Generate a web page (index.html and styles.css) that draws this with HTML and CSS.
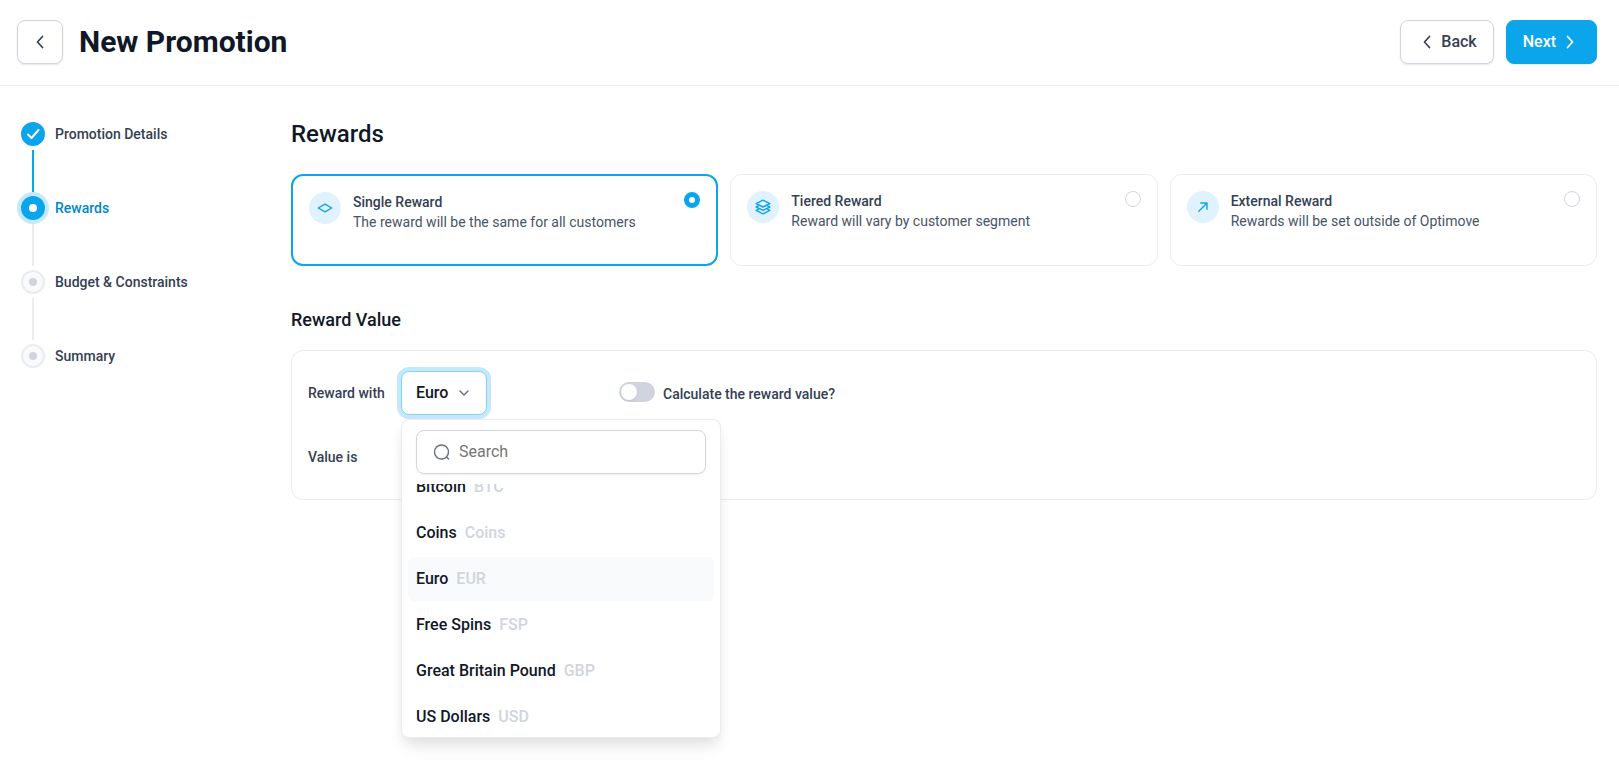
FILE: index.html
```html
<!DOCTYPE html>
<html lang="en">
<head>
    <meta charset="UTF-8">
    <meta name="viewport" content="width=device-width, initial-scale=1.0">
    <title>New Promotion</title>
    <link rel="stylesheet" href="styles.css">
</head>
<body>
    <!-- Header -->
    <header class="page-header">
        <button class="btn btn-icon" type="button" aria-label="Go back">
            <svg class="icon" viewBox="0 0 20 20"><path d="M12.5 4.5 7.5 10l5 5.5"/></svg>
        </button>
        <h1>New Promotion</h1>
        <div class="header-actions">
            <button class="btn" type="button">
                <svg class="icon" viewBox="0 0 20 20"><path d="M12.5 4.5 7.5 10l5 5.5"/></svg>
                Back
            </button>
            <button class="btn btn-primary" type="button">
                Next
                <svg class="icon" viewBox="0 0 20 20"><path d="M7.5 4.5l5 5.5-5 5.5"/></svg>
            </button>
        </div>
    </header>

    <div class="layout">
        <!-- Steps -->
        <nav class="steps">
            <ol>
                <li class="step done">
                    <span class="marker"><svg viewBox="0 0 24 24"><path d="M7 12.5l3.5 3.5L17.5 8"/></svg></span>
                    <a href="#details">Promotion Details</a>
                </li>
                <li class="step current">
                    <span class="marker"></span>
                    <a href="#rewards">Rewards</a>
                </li>
                <li class="step">
                    <span class="marker"></span>
                    <a href="#budget">Budget &amp; Constraints</a>
                </li>
                <li class="step">
                    <span class="marker"></span>
                    <a href="#summary">Summary</a>
                </li>
            </ol>
        </nav>

        <!-- Rewards -->
        <main id="rewards">
            <h2>Rewards</h2>
            <div class="cards">
                <label class="card selected">
                    <span class="card-icon">
                        <svg viewBox="0 0 16 16"><path d="M8 4.2 14.8 8 8 11.8 1.2 8z"/></svg>
                    </span>
                    <span class="card-text">
                        <strong>Single Reward</strong>
                        <span>The reward will be the same for all customers</span>
                    </span>
                    <input type="radio" name="reward-type" checked>
                </label>
                <label class="card">
                    <span class="card-icon">
                        <svg viewBox="0 0 16 16"><path d="M8 1.2 14.8 4.6 8 8 1.2 4.6zM3.2 7 1.2 8 8 11.4 14.8 8l-2-1M3.2 10.4l-2 1L8 14.8l6.8-3.4-2-1"/></svg>
                    </span>
                    <span class="card-text">
                        <strong>Tiered Reward</strong>
                        <span>Reward will vary by customer segment</span>
                    </span>
                    <input type="radio" name="reward-type">
                </label>
                <label class="card">
                    <span class="card-icon">
                        <svg viewBox="0 0 16 16"><path d="M3.8 12.2l8.2-8.2M5.8 4H12v6.2"/></svg>
                    </span>
                    <span class="card-text">
                        <strong>External Reward</strong>
                        <span>Rewards will be set outside of Optimove</span>
                    </span>
                    <input type="radio" name="reward-type">
                </label>
            </div>

            <h3>Reward Value</h3>
            <div class="panel">
                <div class="row">
                    <label class="field-label" for="reward-unit">Reward with</label>
                    <div class="dropdown">
                        <select id="reward-unit">
                            <option>Bitcoin</option>
                            <option>Coins</option>
                            <option selected>Euro</option>
                            <option>Free Spins</option>
                            <option>Great Britain Pound</option>
                            <option>US Dollars</option>
                        </select>
                        <svg class="chevron" viewBox="0 0 16 16"><path d="M4 6l4 4 4-4"/></svg>

                        <!-- Currency menu -->
                        <div class="menu">
                            <div class="search">
                                <svg viewBox="0 0 20 20"><circle cx="9.5" cy="10" r="7"/><path d="M14.5 15l2 2"/></svg>
                                <input type="text" placeholder="Search" aria-label="Search">
                            </div>
                            <ul class="options" id="options">
                                <li>Bitcoin <span>BTC</span></li>
                                <li>Coins <span>Coins</span></li>
                                <li class="active">Euro <span>EUR</span></li>
                                <li>Free Spins <span>FSP</span></li>
                                <li>Great Britain Pound <span>GBP</span></li>
                                <li>US Dollars <span>USD</span></li>
                            </ul>
                        </div>
                    </div>
                    <div class="switch">
                        <input type="checkbox" id="calculate">
                        <label for="calculate">Calculate the reward value?</label>
                    </div>
                </div>
                <div class="row">
                    <span class="field-label">Value is</span>
                </div>
            </div>
        </main>
    </div>

    <script>
        document.getElementById('options').scrollTop = 19;
    </script>
</body>
</html>
```
FILE: styles.css
```css
/* Global Styles */
* {
    box-sizing: border-box;
}

body {
    font-family: 'Roboto', sans-serif;
    font-size: 14px;
    line-height: 20px;
    margin: 0;
    min-height: 100vh;
    background-color: #fff;
    color: #344054;
}

h1, h2, h3, ol, ul {
    margin: 0;
    padding: 0;
}

h1, h2, h3 {
    color: #101828;
}

ol, ul {
    list-style: none;
}

a {
    color: inherit;
    text-decoration: none;
}

svg {
    display: block;
    flex: none;
    fill: none;
    stroke: currentColor;
    stroke-linecap: round;
    stroke-linejoin: round;
}

/* Header */
.page-header {
    display: flex;
    align-items: center;
    gap: 16px;
    padding: 20px 22px 21px 17px;
    border-bottom: 1px solid #eaecf0;
}

.page-header h1 {
    font-size: 30px;
    line-height: 38px;
    font-weight: 700;
}

.header-actions {
    display: flex;
    gap: 12px;
    margin-left: auto;
}

.btn {
    display: flex;
    align-items: center;
    justify-content: center;
    gap: 4px;
    height: 44px;
    padding: 0 16px;
    border: 1px solid #d0d5dd;
    border-radius: 8px;
    background: #fff;
    box-shadow: 0 1px 2px rgba(16, 24, 40, 0.1);
    color: #344054;
    font: 500 16px/24px 'Roboto', sans-serif;
    cursor: pointer;
}

.btn-icon {
    width: 46px;
    padding: 0;
}

.btn-primary {
    border-color: #0ba5ec;
    background: #0ba5ec;
    color: #fff;
}

.icon {
    width: 20px;
    height: 20px;
    stroke-width: 1.7;
}

/* Layout */
.layout {
    display: flex;
    min-height: calc(100vh - 86px);
    padding: 36px 22px 20px 21px;
}

/* Steps */
.steps {
    flex: none;
    width: 270px;
}

.step {
    position: relative;
    display: flex;
    align-items: center;
    gap: 10px;
    height: 24px;
    margin-bottom: 50px;
    font-weight: 500;
}

.step:not(:last-child)::after {
    content: "";
    position: absolute;
    top: 28px;
    left: 11px;
    width: 2px;
    height: 42px;
    background: #eaecf0;
}

.marker {
    display: flex;
    align-items: center;
    justify-content: center;
    width: 24px;
    height: 24px;
    border: 2px solid #eaecf0;
    border-radius: 50%;
    background: #f9fafb;
}

.marker:empty::before {
    content: "";
    width: 8px;
    height: 8px;
    border-radius: 50%;
    background: #d0d5dd;
}

.marker svg {
    width: 24px;
    height: 24px;
    stroke-width: 2;
}

.done .marker,
.current .marker {
    border-color: #0ba5ec;
    background: #0ba5ec;
    color: #fff;
}

.step.done::after {
    background: #0ba5ec;
}

.current .marker {
    box-shadow: 0 0 0 4px #c5e9fb;
}

.current .marker:empty::before {
    background: #fff;
}

.step.current {
    color: #0086c9;
}

/* Rewards */
main {
    flex: 1;
    min-width: 0;
}

main h2 {
    font-size: 24px;
    line-height: 24px;
    font-weight: 500;
}

main h3 {
    margin: 40px 0 16px;
    font-size: 18px;
    line-height: 28px;
    font-weight: 500;
}

/* Cards */
.cards {
    display: grid;
    grid-template-columns: repeat(3, 1fr);
    gap: 12px;
    margin-top: 28px;
}

.card {
    display: flex;
    align-items: flex-start;
    gap: 12px;
    min-height: 92px;
    padding: 16px;
    border: 1px solid #eaecf0;
    border-radius: 12px;
    cursor: pointer;
}

.card.selected {
    border: 2px solid #0ba5ec;
}

.card-icon {
    display: flex;
    align-items: center;
    justify-content: center;
    flex: none;
    width: 32px;
    height: 32px;
    border-radius: 50%;
    background: #e0f2fe;
    color: #0ba5ec;
}

.card-icon svg {
    width: 16px;
    height: 16px;
    stroke-width: 1.4;
}

.card-text {
    display: flex;
    flex-direction: column;
    flex: 1;
}

.card-text strong {
    font-weight: 500;
}

.card-text span {
    color: #475467;
}

.card input {
    appearance: none;
    width: 16px;
    height: 16px;
    margin: 0;
    border: 1px solid #d0d5dd;
    border-radius: 50%;
    background: #fff;
}

.card input:checked {
    border: 5px solid #0ba5ec;
}

/* Reward Value */
.panel {
    display: flex;
    flex-direction: column;
    gap: 20px;
    padding: 20px 16px;
    border: 1px solid #eaecf0;
    border-radius: 12px;
}

.row {
    display: flex;
    align-items: center;
    height: 44px;
}

.field-label {
    width: 93px;
    font-weight: 500;
}

.dropdown {
    position: relative;
    width: 218px;
}

.dropdown select {
    appearance: none;
    display: block;
    width: 86px;
    height: 44px;
    padding: 0 14px;
    border: 1px solid #7cd4fd;
    border-radius: 8px;
    outline: none;
    background: #fff;
    box-shadow: 0 0 0 4px #c5e9fb;
    color: #101828;
    font: 500 16px/24px 'Roboto', sans-serif;
}

.chevron {
    position: absolute;
    top: 14px;
    left: 55px;
    width: 16px;
    height: 16px;
    color: #667085;
    stroke-width: 1.4;
    pointer-events: none;
}

/* Currency menu */
.menu {
    position: absolute;
    top: 48px;
    left: 0;
    width: 320px;
    padding-top: 10px;
    border: 1px solid #eaecf0;
    border-radius: 8px;
    background: #fff;
    box-shadow: 0 12px 16px -4px rgba(16, 24, 40, 0.1), 0 4px 12px rgba(16, 24, 40, 0.04);
    z-index: 10;
}

.search {
    display: flex;
    align-items: center;
    gap: 7px;
    height: 44px;
    margin: 0 14px 10px;
    padding: 0 15px;
    border: 1px solid #d0d5dd;
    border-radius: 8px;
    box-shadow: 0 1px 2px rgba(16, 24, 40, 0.05);
}

.search svg {
    width: 20px;
    height: 20px;
    color: #667085;
    stroke-width: 1.4;
}

.search input {
    flex: 1;
    min-width: 0;
    padding: 0;
    border: none;
    outline: none;
    font: 400 16px/24px 'Roboto', sans-serif;
}

.search input::placeholder {
    color: #757575;
}

.options {
    display: flex;
    flex-direction: column;
    gap: 2px;
    height: 253px;
    padding: 0 6px;
    overflow-y: auto;
    scrollbar-width: none;
}

.options li {
    display: flex;
    align-items: center;
    flex: none;
    gap: 8px;
    height: 44px;
    padding: 0 8px;
    border-radius: 6px;
    color: #101828;
    font-size: 16px;
    font-weight: 500;
}

.options li.active {
    background: #f9fafb;
}

.options span {
    color: #d0d5dd;
}

/* Switch */
.switch {
    display: flex;
    align-items: flex-start;
    gap: 8px;
    font-weight: 500;
}

.switch label {
    padding-top: 2px;
}

.switch input {
    appearance: none;
    display: flex;
    align-items: center;
    width: 36px;
    height: 20px;
    margin: 0;
    padding: 0 2px;
    border-radius: 10px;
    background: #d0d5dd;
    cursor: pointer;
}

.switch input::before {
    content: "";
    width: 16px;
    height: 16px;
    border-radius: 50%;
    background: #fff;
    box-shadow: 0 1px 2px rgba(16, 24, 40, 0.1);
}

.switch input:checked {
    justify-content: flex-end;
    background: #0ba5ec;
}
```
